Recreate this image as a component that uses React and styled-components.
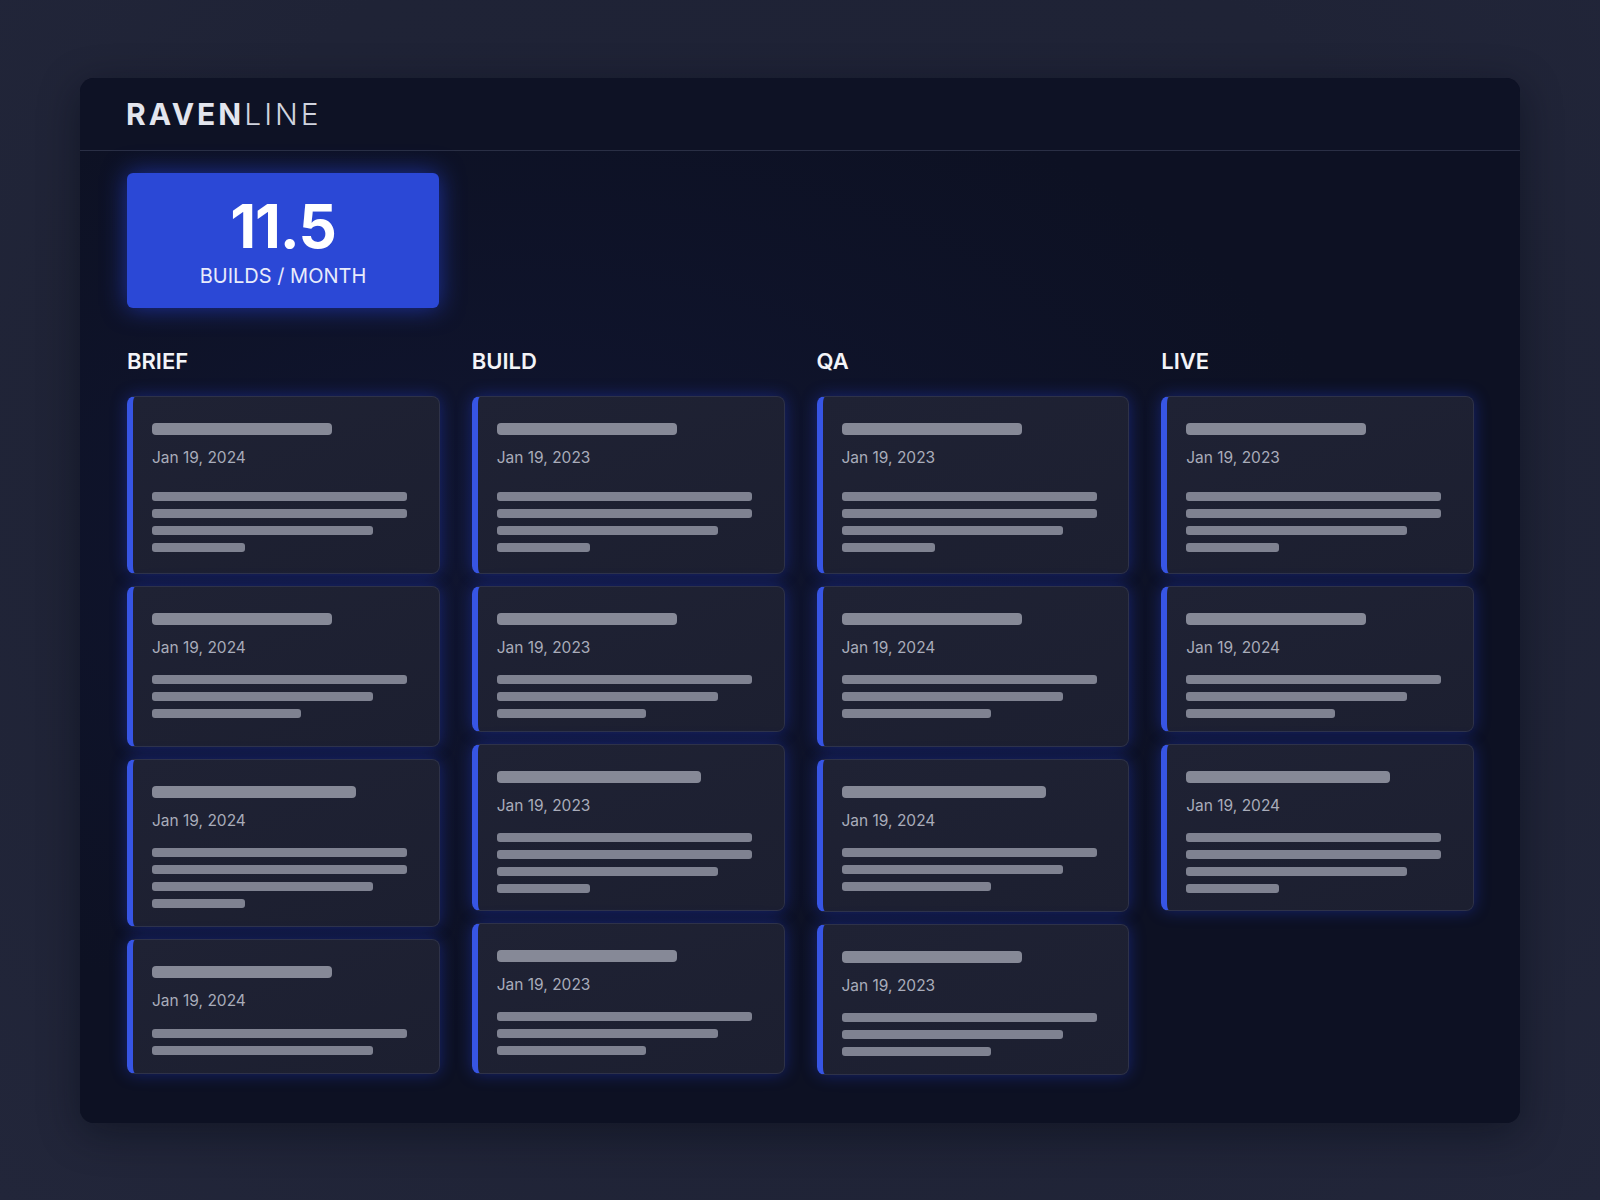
import React from 'react';
import styled, { createGlobalStyle } from 'styled-components';

const GlobalStyle = createGlobalStyle`
  html, body {
    margin: 0;
    padding: 0;
    background: #20243a;
    font-family: Inter, "Noto Sans", "Liberation Sans", sans-serif;
  }
`;

const Page = styled.div`
  min-height: 1200px;
  box-sizing: border-box;
  padding: 78px 80px 79px;
  background: radial-gradient(ellipse at 50% 40%, #1e2236 0%, #1f2336 60%, #22263a 100%);
`;

const Panel = styled.div`
  min-height: 1043px;
  box-sizing: border-box;
  background: #0d1123;
  border-radius: 14px;
  overflow: hidden;
  box-shadow: 0 10px 40px rgba(5, 8, 20, 0.45);
`;

const Header = styled.header`
  height: 72px;
  display: flex;
  align-items: center;
  padding: 0 46px;
  border-bottom: 1px solid #2a2f45;
  background: #0e1225;
`;

const Logo = styled.div`
  font-size: 30px;
  letter-spacing: 3px;
  color: #e3e5ee;
  line-height: 1;
`;

const LogoStrong = styled.span`
  font-weight: 700;
`;

const LogoLight = styled.span`
  font-weight: 300;
  color: #d0d3de;
`;

const Content = styled.main`
  padding: 22px 46px 48px 47px;
  background: radial-gradient(ellipse at 30% 40%, #101530 0%, #0d1123 60%);
`;

const StatCard = styled.div`
  width: 312px;
  height: 135px;
  box-sizing: border-box;
  background: #2b48d6;
  border-radius: 6px;
  box-shadow: 0 0 24px rgba(40, 70, 235, 0.6);
  display: flex;
  flex-direction: column;
  align-items: center;
  justify-content: center;
  gap: 8px;
  color: #fff;
`;

const StatValue = styled.div`
  font-size: 60px;
  font-weight: 700;
  line-height: 60px;
  letter-spacing: -1px;
  margin-top: 3px;
`;

const StatLabel = styled.div`
  font-size: 20px;
  line-height: 24px;
  color: #e8ebfb;
`;

const Board = styled.div`
  margin-top: 39px;
  display: grid;
  grid-template-columns: repeat(4, 1fr);
  column-gap: 32px;
  align-items: start;
`;

const Column = styled.section`
  display: flex;
  flex-direction: column;
`;

const ColumnTitle = styled.h2`
  margin: 0 0 21px;
  font-size: 22px;
  line-height: 28px;
  font-weight: 600;
  color: #f3f4f8;
`;

const CardList = styled.div`
  display: flex;
  flex-direction: column;
  gap: 12px;
`;

const Card = styled.div`
  height: ${p => p.$h}px;
  box-sizing: border-box;
  padding: 26px 30px 0 19px;
  background: linear-gradient(160deg, #1f2234 0%, #1c1f30 100%);
  border: 1px solid #2e3249;
  border-left: 6px solid #3755e4;
  border-radius: 8px;
  box-shadow: 0 0 16px rgba(35, 62, 220, 0.42);
  display: flex;
  flex-direction: column;
  align-items: flex-start;
`;

const TitleBar = styled.div`
  width: ${p => (p.$long ? 204 : 180)}px;
  height: 12px;
  border-radius: 4px;
  background: #868997;
`;

const DateText = styled.div`
  margin-top: 13px;
  font-size: 15.5px;
  line-height: 20px;
  color: #a9acba;
`;

const Lines = styled.div`
  margin-top: ${p => p.$gap}px;
  width: 255px;
  display: flex;
  flex-direction: column;
  gap: 8px;
`;

const Line = styled.div`
  width: ${p => p.$w}px;
  height: 9px;
  border-radius: 3px;
  background: #7f8291;
`;

const FOUR = [255, 255, 221, 93];
const THREE = [255, 221, 149];
const TWO = [255, 221];

const columns = [
  {
    title: 'BRIEF',
    cards: [
      { date: 'Jan 19, 2024', lines: FOUR, h: 178, gap: 24 },
      { date: 'Jan 19, 2024', lines: THREE, h: 161, gap: 17 },
      { date: 'Jan 19, 2024', lines: FOUR, h: 168, gap: 17, long: true },
      { date: 'Jan 19, 2024', lines: TWO, h: 135, gap: 18 },
    ],
  },
  {
    title: 'BUILD',
    cards: [
      { date: 'Jan 19, 2023', lines: FOUR, h: 178, gap: 24 },
      { date: 'Jan 19, 2023', lines: THREE, h: 146, gap: 17 },
      { date: 'Jan 19, 2023', lines: FOUR, h: 167, gap: 17, long: true },
      { date: 'Jan 19, 2023', lines: THREE, h: 151, gap: 17 },
    ],
  },
  {
    title: 'QA',
    cards: [
      { date: 'Jan 19, 2023', lines: FOUR, h: 178, gap: 24 },
      { date: 'Jan 19, 2024', lines: THREE, h: 161, gap: 17 },
      { date: 'Jan 19, 2024', lines: THREE, h: 153, gap: 17, long: true },
      { date: 'Jan 19, 2023', lines: THREE, h: 151, gap: 17 },
    ],
  },
  {
    title: 'LIVE',
    cards: [
      { date: 'Jan 19, 2023', lines: FOUR, h: 178, gap: 24 },
      { date: 'Jan 19, 2024', lines: THREE, h: 146, gap: 17 },
      { date: 'Jan 19, 2024', lines: FOUR, h: 167, gap: 17, long: true },
    ],
  },
];

const TaskCard = ({ date, lines, h, gap, long }) => (
  <Card $h={h}>
    <TitleBar $long={long} />
    <DateText>{date}</DateText>
    <Lines $gap={gap}>
      {lines.map((w, i) => (
        <Line key={i} $w={w} />
      ))}
    </Lines>
  </Card>
);

export default function App() {
  return (
    <>
      <GlobalStyle />
      <Page>
        <Panel>
          <Header>
            <Logo>
              <LogoStrong>RAVEN</LogoStrong>
              <LogoLight>LINE</LogoLight>
            </Logo>
          </Header>
          <Content>
            <StatCard>
              <StatValue>11.5</StatValue>
              <StatLabel>BUILDS / MONTH</StatLabel>
            </StatCard>
            <Board>
              {columns.map(col => (
                <Column key={col.title}>
                  <ColumnTitle>{col.title}</ColumnTitle>
                  <CardList>
                    {col.cards.map((c, i) => (
                      <TaskCard key={i} {...c} />
                    ))}
                  </CardList>
                </Column>
              ))}
            </Board>
          </Content>
        </Panel>
      </Page>
    </>
  );
}
